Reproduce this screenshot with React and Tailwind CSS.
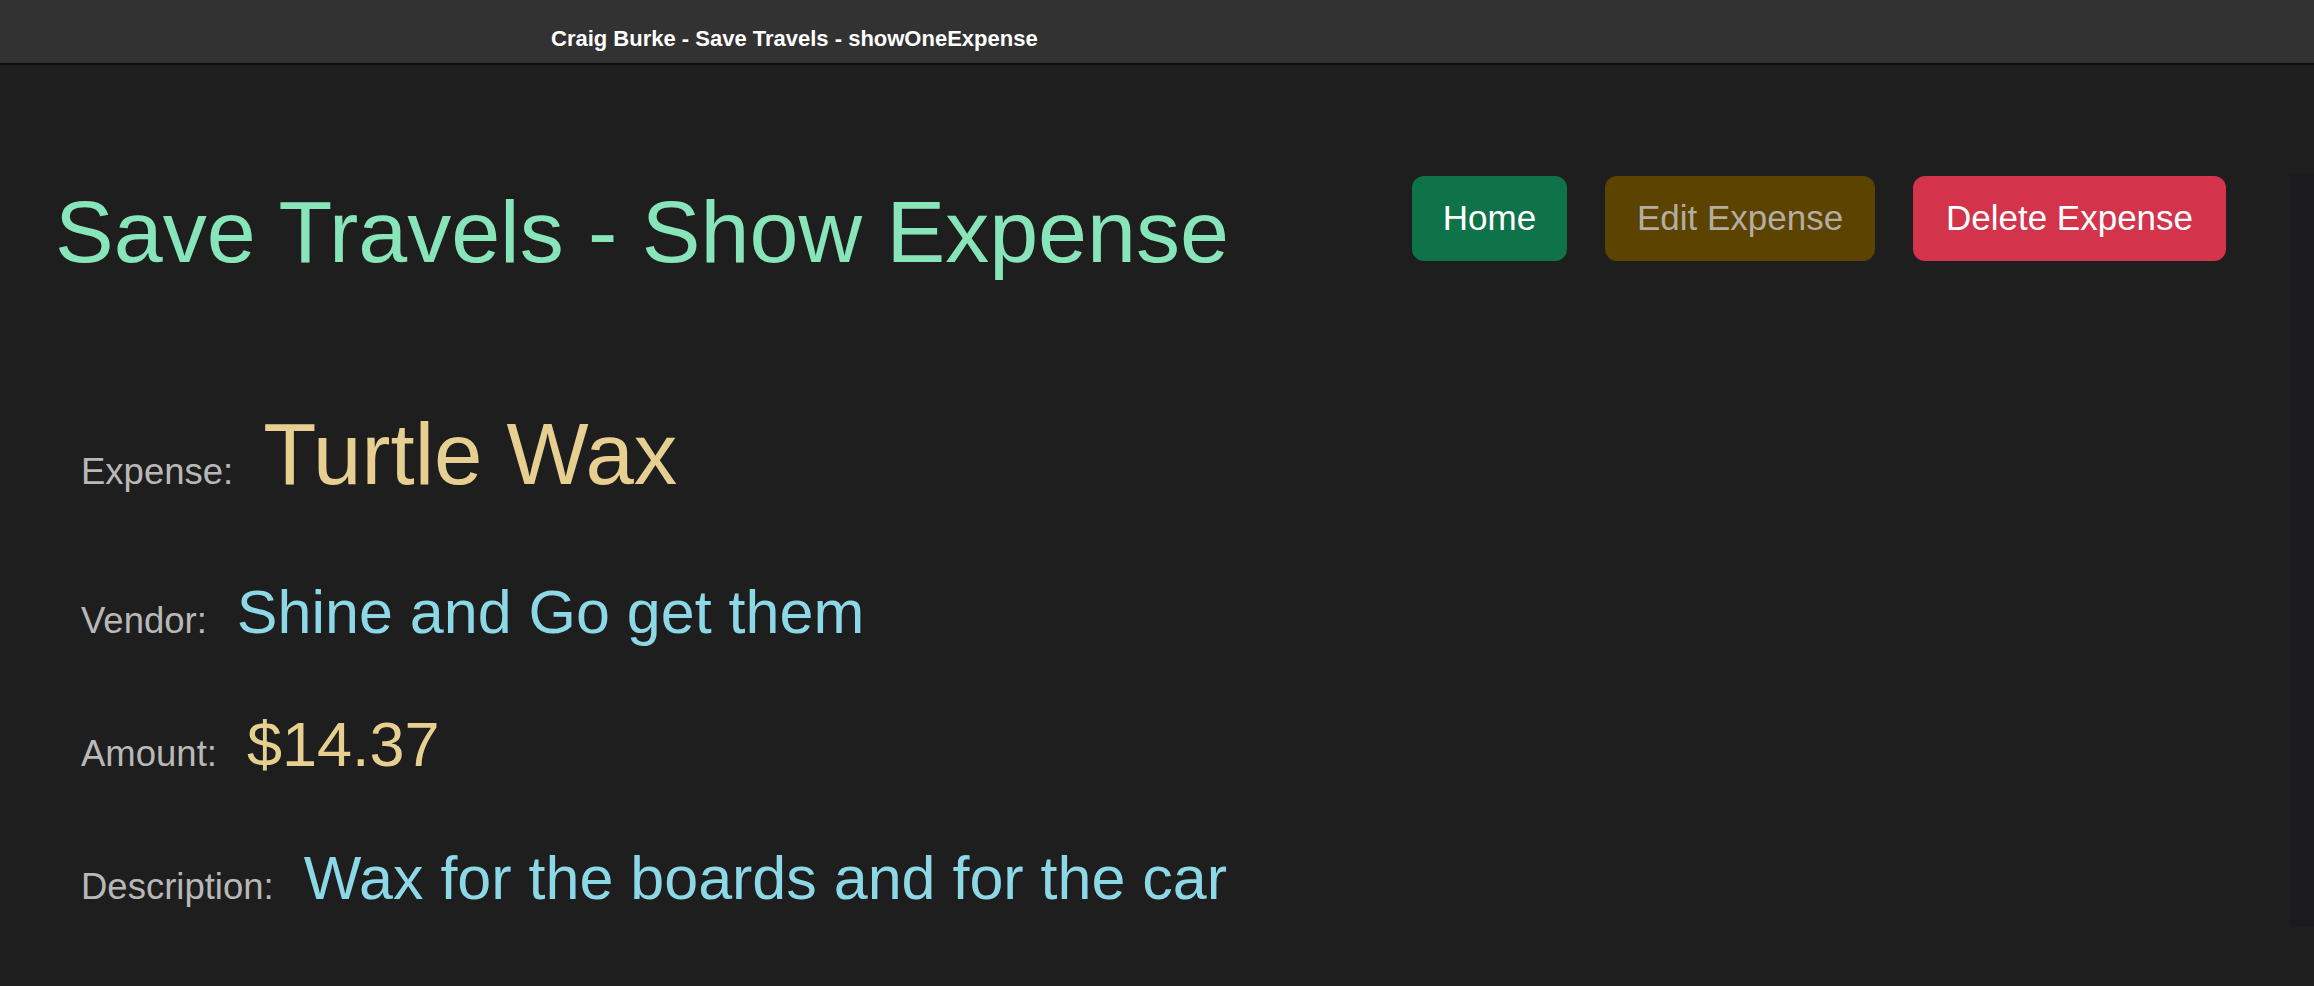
import React from "react";

const expense = {
  name: "Turtle Wax",
  vendor: "Shine and Go get them",
  amount: "$14.37",
  description: "Wax for the boards and for the car",
};

function Field({ label, children, className = "" }) {
  return (
    <div className={`flex items-baseline gap-[30px] ${className}`}>
      <span className="text-[36.5px] leading-[42px] text-[#b8b8b8]">{label}</span>
      {children}
    </div>
  );
}

export default function App() {
  return (
    <div className="min-h-[986px] bg-[#1e1e1e] font-['Liberation_Sans',Arial,sans-serif]">
      {/* window title bar */}
      <div className="h-[65px] bg-[#323232] pl-[551px] pt-[27px] border-b-2 border-[#0c0c0c]">
        <span className="text-[22px] leading-[24px] font-bold text-white">
          Craig Burke - Save Travels - showOneExpense
        </span>
      </div>

      <div className="flex">
        <div className="flex-1">
          <div className="flex items-start justify-between pl-[55px] pr-[64px]">
            <h1 className="mt-[114px] text-[88px] leading-[106px] text-[#88e4b9]">
              Save Travels - Show Expense
            </h1>
            <div className="mt-[111px] flex gap-[38px]">
              <button className="w-[155px] h-[85px] rounded-[12px] bg-[#0f7349] text-[35px] text-white">
                Home
              </button>
              <button className="w-[270px] h-[85px] rounded-[12px] bg-[#5c4300] text-[35px] text-[#b3ada3]">
                Edit Expense
              </button>
              <button className="w-[313px] h-[85px] rounded-[12px] bg-[#d3344b] text-[35px] text-white">
                Delete Expense
              </button>
            </div>
          </div>

          <div className="pl-[81px]">
            <Field label="Expense:" className="mt-[117px]">
              <span className="text-[87px] leading-[104px] text-[#e6cf91]">{expense.name}</span>
            </Field>
            <Field label="Vendor:" className="mt-[70px]">
              <span className="text-[61px] leading-[73px] text-[#8dd8e6]">{expense.vendor}</span>
            </Field>
            <Field label="Amount:" className="mt-[59px]">
              <span className="text-[63px] leading-[73px] text-[#e6cf91]">{expense.amount}</span>
            </Field>
            <Field label="Description:" className="mt-[61px]">
              <span className="text-[61px] leading-[73px] text-[#8dd8e6]">{expense.description}</span>
            </Field>
          </div>
        </div>

        {/* scroll track */}
        <div className="w-[24px] mt-[109px] h-[753px] bg-[#1b1b1e]" />
      </div>
    </div>
  );
}
